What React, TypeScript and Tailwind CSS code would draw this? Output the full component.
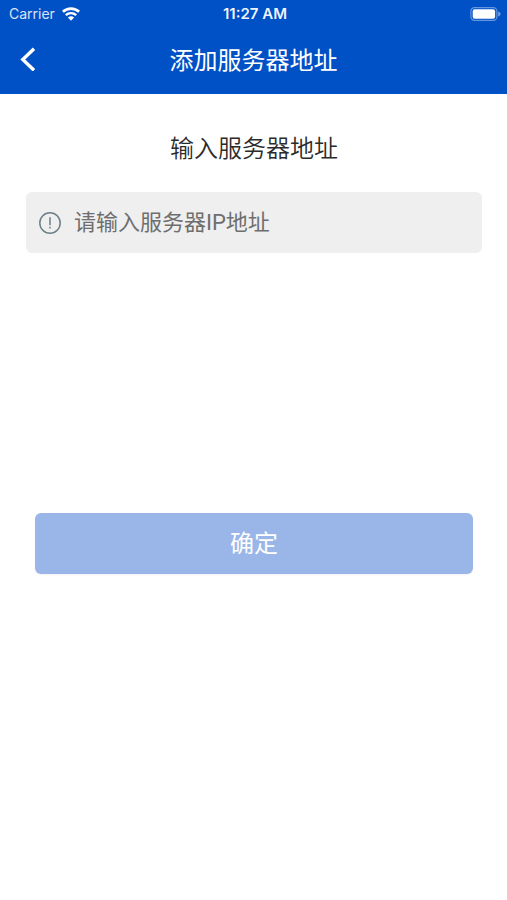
import React, { useState } from 'react';

// Status bar wifi symbol
const WifiIcon: React.FC = () => (
    <svg className="w-[18px] h-[14px]" viewBox="0 0 18 14" fill="none" stroke="white" aria-hidden="true">
        <path d="M0.9 4.8C5.4 0.5 12.6 0.5 17.1 4.8" strokeWidth="2.6" />
        <path d="M3.8 8.2C6.8 5.4 11.2 5.4 14.2 8.2" strokeWidth="2.4" />
        <path d="M9 13.7L5.9 10.6C7.7 8.9 10.3 8.9 12.1 10.6Z" fill="white" stroke="none" />
    </svg>
);

const BatteryIcon: React.FC = () => (
    <svg className="w-[31px] h-[14px]" viewBox="0 0 31 14" fill="none" aria-hidden="true">
        <rect x="0.9" y="0.7" width="26" height="12.6" rx="3.6" stroke="white" strokeOpacity="0.4" strokeWidth="1.2" />
        <rect x="2.7" y="2.3" width="22.4" height="9.4" rx="2" fill="white" />
        <path d="M28.2 4.6C31.4 5.6 31.4 8.4 28.2 9.4Z" fill="white" fillOpacity="0.45" />
    </svg>
);

const StatusBar: React.FC = () => (
    <div className="grid grid-cols-3 items-center h-7 pl-[9px] pr-[6px]">
        <div className="flex items-center gap-[7px] text-sm text-white/85">
            <span>Carrier</span>
            <WifiIcon />
        </div>
        <span className="text-center text-[15px] font-semibold text-white/95">11:27 AM</span>
        <div className="flex justify-end">
            <BatteryIcon />
        </div>
    </div>
);

const NavBar: React.FC = () => (
    <div className="grid grid-cols-[1fr_auto_1fr] items-center h-[66px] pb-1 px-5">
        <button type="button" aria-label="返回" className="justify-self-start">
            <svg className="w-4 h-6" viewBox="0 0 16 24" fill="none" stroke="white" strokeWidth="3.4" aria-hidden="true">
                <path d="M14 1.7L2.8 12.5L14 23.3" />
            </svg>
        </button>
        <h1 className="text-2xl leading-9 pt-1 text-white">添加服务器地址</h1>
    </div>
);

const App: React.FC = () => {
    const [address, setAddress] = useState('');

    return (
        <div className="min-h-screen bg-white font-[Inter,'Noto_Sans_CJK_SC',sans-serif]">
            <header className="bg-[#0050c6]">
                <StatusBar />
                <NavBar />
            </header>

            <main className="pl-[26px] pr-[25px] pt-[37px]">
                <label htmlFor="server-address" className="block text-center text-2xl leading-9 font-[350] text-[#2b2b2b]">
                    输入服务器地址
                </label>

                {/* Address field */}
                <div className="mt-[25px] flex items-center gap-3 h-[61px] px-3 rounded-md bg-[#efefef]">
                    <svg className="w-6 h-6 shrink-0" viewBox="0 0 24 24" fill="none" stroke="#6b8087" strokeWidth="1.5" aria-hidden="true">
                        <circle cx="12" cy="12" r="10.2" />
                        <path d="M12 6.2V14.2M12 15.8V17.6" />
                    </svg>
                    <input
                        id="server-address"
                        type="text"
                        value={address}
                        onChange={(e) => setAddress(e.target.value)}
                        placeholder="请输入服务器IP地址"
                        className="flex-1 min-w-0 h-9 bg-transparent outline-none font-[Roboto,'Noto_Sans_CJK_SC',sans-serif] text-[22px] text-[#2b2b2b] placeholder:text-[#6e6e6e]"
                    />
                </div>

                <div className="px-[9px] mt-[260px]">
                    <button type="button" className="w-full h-[61px] pt-px rounded-md bg-[#9ab6e8] text-2xl text-white shadow-xs">
                        确定
                    </button>
                </div>
            </main>
        </div>
    );
};

export default App;
